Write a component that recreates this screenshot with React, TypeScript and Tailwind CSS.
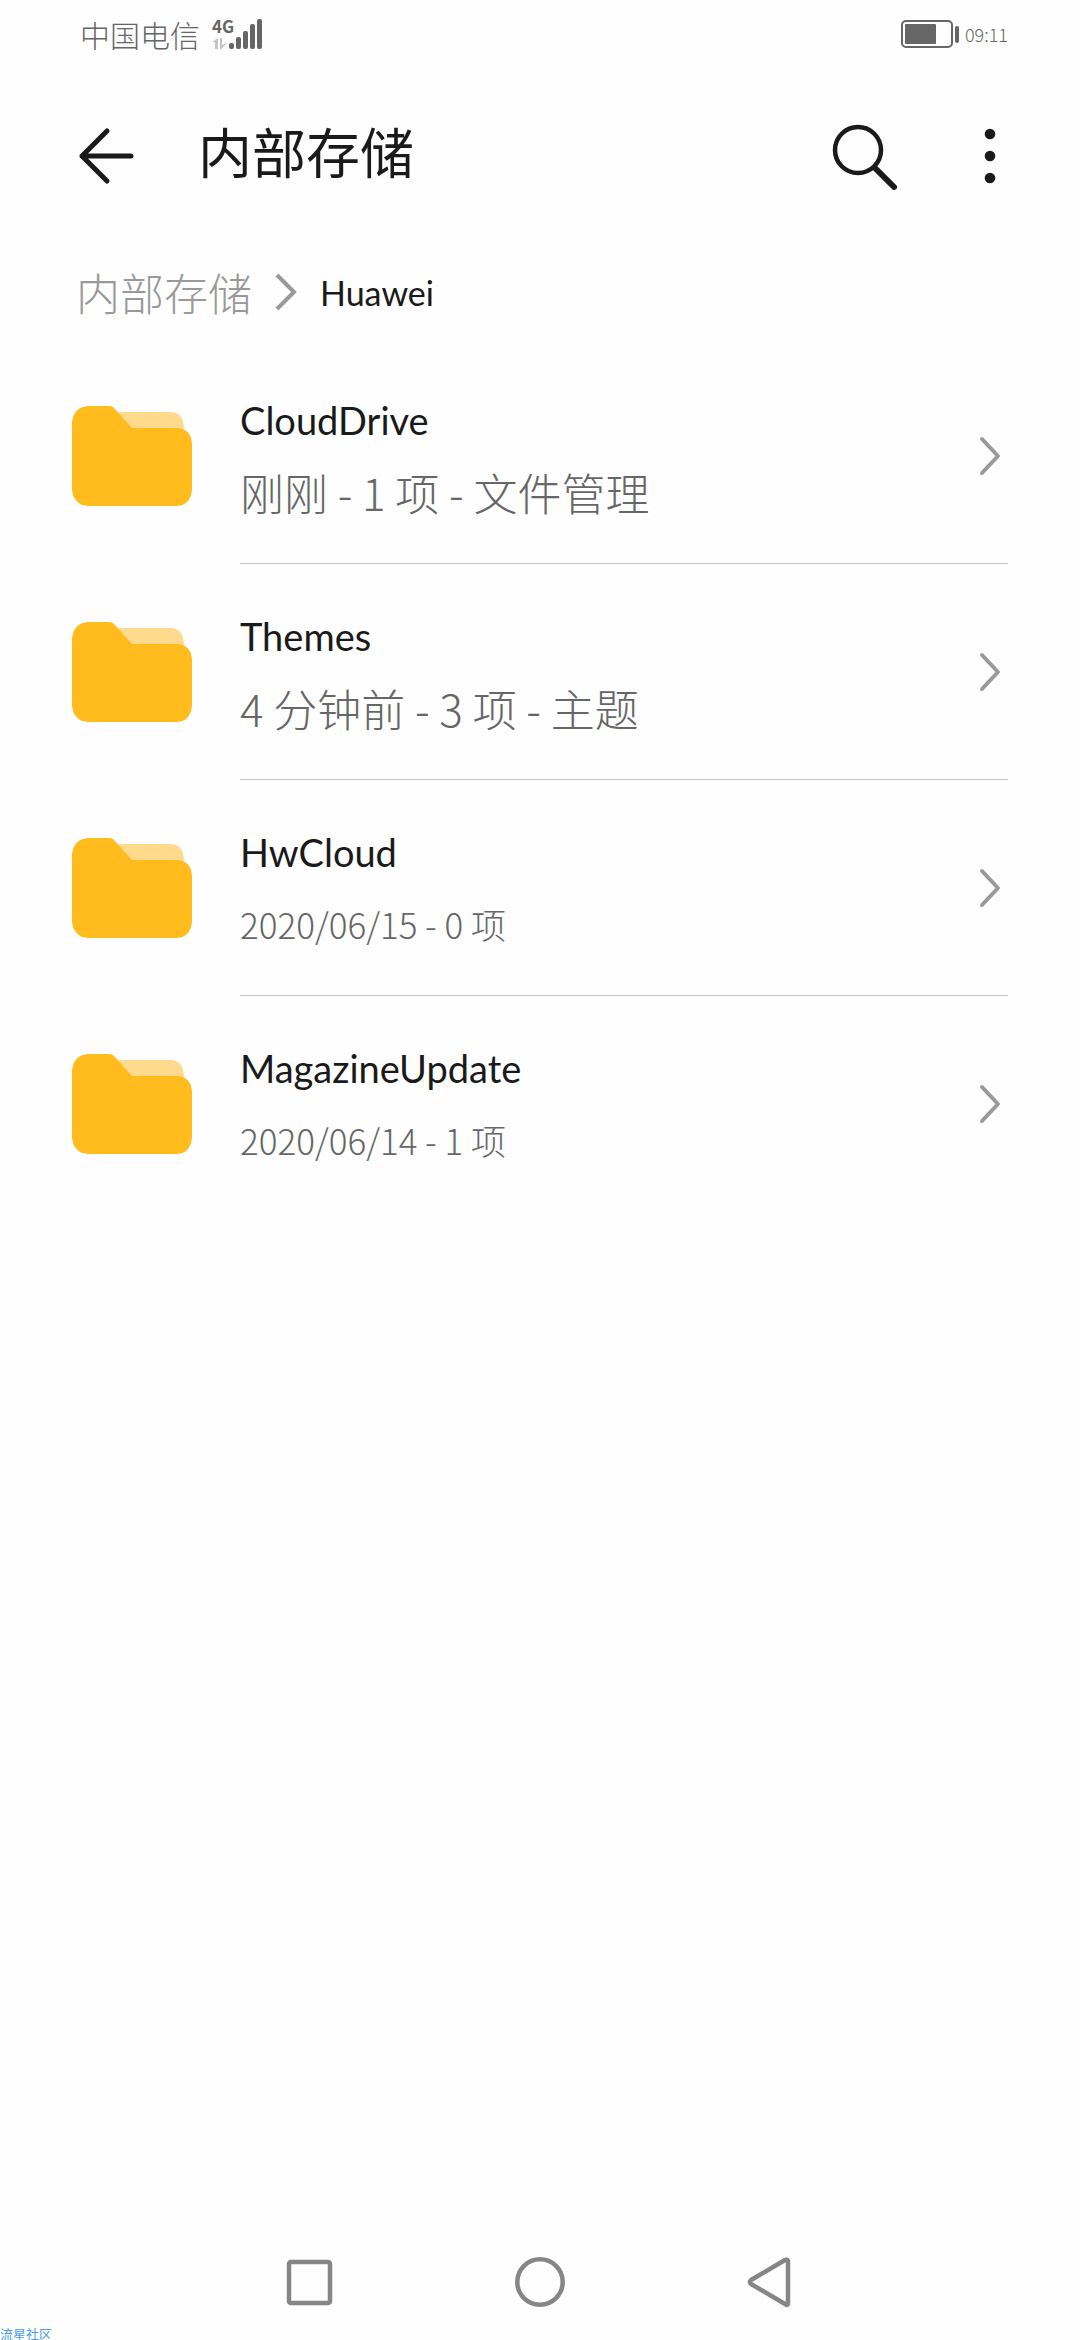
import React from "react";

type Folder = {
  name: string;
  info: string;
  dated?: boolean;
};

const folders: Folder[] = [
  { name: "CloudDrive", info: "刚刚 - 1 项 - 文件管理" },
  { name: "Themes", info: "4 分钟前 - 3 项 - 主题" },
  { name: "HwCloud", info: "2020/06/15 - 0 项", dated: true },
  { name: "MagazineUpdate", info: "2020/06/14 - 1 项", dated: true },
];

const StatusBar: React.FC = () => (
  <div className="flex h-17 items-center justify-between pr-18 pl-20 text-[#666]">
    <div className="flex items-center gap-3">
      <span className="text-[30px] font-light">中国电信</span>
      <svg width="54" height="56" viewBox="0 -12 54 56" fill="currentColor" aria-label="4G">
        <text x="0" y="15" fontSize="17" fontWeight="700">
          4G
        </text>
        <g fill="#c4c4c4">
          <path d="M0 24l6-4v11H3v-7zM8 20h2v7l5-2-6 6H8z" />
        </g>
        <rect x="17" y="25" width="5" height="6" rx="2" />
        <rect x="24" y="19" width="5" height="12" rx="2" />
        <rect x="31" y="13" width="5" height="18" rx="2" />
        <rect x="38" y="6" width="5" height="25" rx="2" />
        <rect x="45" y="1" width="5" height="30" rx="2" />
      </svg>
    </div>
    <div className="flex items-center gap-1">
      <svg width="60" height="30" viewBox="0 0 60 30" fill="currentColor" aria-label="Battery">
        <rect x="1" y="2" width="50" height="26" rx="4" fill="none" stroke="currentColor" strokeWidth="2" />
        <rect x="4" y="5" width="31" height="20" rx="1" />
        <rect x="54" y="7" width="4" height="17" rx="2" />
      </svg>
      <span className="text-lg font-light">09:11</span>
    </div>
  </div>
);

const Header: React.FC = () => (
  <header className="flex h-44 items-center pr-18 pl-19">
    <button aria-label="Back" className="mr-15">
      <svg width="62" height="62" viewBox="0 0 62 62" fill="none" stroke="#1a1a1a" strokeWidth="5" strokeLinecap="round" strokeLinejoin="round">
        <path d="M31 6L6 31l25 25M6 31h49" />
      </svg>
    </button>
    <h1 className="flex-1 pb-3 text-[54px] text-[#1a1a1a]">内部存储</h1>
    <button aria-label="Search" className="mr-18">
      <svg width="72" height="72" viewBox="0 0 72 72" fill="none" stroke="#1a1a1a" strokeLinecap="round">
        <circle cx="30" cy="30" r="23" strokeWidth="4.5" />
        <path d="M47 48l19 19" strokeWidth="6" />
      </svg>
    </button>
    <button aria-label="More">
      <svg width="36" height="60" viewBox="0 0 36 60" fill="#1a1a1a">
        <circle cx="18" cy="8" r="5.3" />
        <circle cx="18" cy="30" r="5.3" />
        <circle cx="18" cy="52" r="5.3" />
      </svg>
    </button>
  </header>
);

const Breadcrumb: React.FC = () => (
  <div className="flex h-26 items-center gap-5 pb-2 pl-19">
    <a href="#" className="text-[44px] font-light text-[#999]">
      内部存储
    </a>
    <svg width="28" height="44" viewBox="0 0 28 44" fill="none" stroke="#999" strokeWidth="4">
      <path d="M5 5l17 17L5 39" />
    </svg>
    <span className="font-[Lato,sans-serif] text-[34px] text-[#1a1a1a]">Huawei</span>
  </div>
);

const FolderIcon: React.FC = () => (
  <svg width="120" height="100" viewBox="0 0 120 100">
    <path d="M40 6h58q14 0 14 18v10H40z" fill="#ffda8c" />
    <path d="M16 0h21q3 0 5 2l18 20h46q14 2 14 17v45q-2 16-16 16H16Q2 99 0 84V16Q2 1 16 0z" fill="#ffbc1c" />
  </svg>
);

const FolderRow: React.FC<{ folder: Folder; last: boolean }> = ({ folder, last }) => (
  <li>
    <a href="#" className="flex items-center px-18">
      <FolderIcon />
      <div
        className={
          last
            ? "ml-12 flex h-54 flex-1 items-center justify-between"
            : "ml-12 flex h-54 flex-1 items-center justify-between border-b border-[#c4c4c4]"
        }
      >
        <div>
          <div className="font-[Lato,sans-serif] text-[38px] leading-[72px] text-[#1a1a1a]">{folder.name}</div>
          <div
            className={
              folder.dated
                ? "text-[35px] leading-[72px] font-light text-[#666]"
                : "text-[44px] leading-[72px] font-light text-[#666]"
            }
          >
            {folder.info}
          </div>
        </div>
        <svg className="mr-1" width="28" height="44" viewBox="0 0 28 44" fill="none" stroke="#999" strokeWidth="4" strokeLinecap="round" strokeLinejoin="round">
          <path d="M6 5l16 17L6 39" />
        </svg>
      </div>
    </a>
  </li>
);

const NavBar: React.FC = () => (
  <nav className="flex h-29 items-center justify-center gap-42 text-[#868686]">
    <button aria-label="Recents">
      <svg width="62" height="62" viewBox="0 0 62 62" fill="none" stroke="currentColor" strokeWidth="4.5">
        <rect x="10" y="11" width="41" height="41" rx="2" />
      </svg>
    </button>
    <button aria-label="Home">
      <svg width="62" height="62" viewBox="0 0 62 62" fill="none" stroke="currentColor" strokeWidth="4.5">
        <circle cx="31" cy="31" r="22.7" />
      </svg>
    </button>
    <button aria-label="Back">
      <svg width="62" height="62" viewBox="0 0 62 62" fill="none" stroke="currentColor" strokeWidth="4.5" strokeLinejoin="round">
        <path d="M49 10v43q-1 2-3 0L12 33q-2-2 0-4L46 9q2-1 3 1z" />
      </svg>
    </button>
  </nav>
);

export default function App() {
  return (
    <div className="relative flex min-h-screen flex-col bg-[#fefefe] font-['Noto_Sans_CJK_SC',sans-serif]">
      <StatusBar />
      <Header />
      <Breadcrumb />
      <ul className="flex-1">
        {folders.map((folder, index) => (
          <FolderRow key={folder.name} folder={folder} last={index === folders.length - 1} />
        ))}
      </ul>
      <NavBar />
      <span className="absolute bottom-0 left-0 text-[13px] leading-3 text-[#4a9be8]">流星社区</span>
    </div>
  );
}
